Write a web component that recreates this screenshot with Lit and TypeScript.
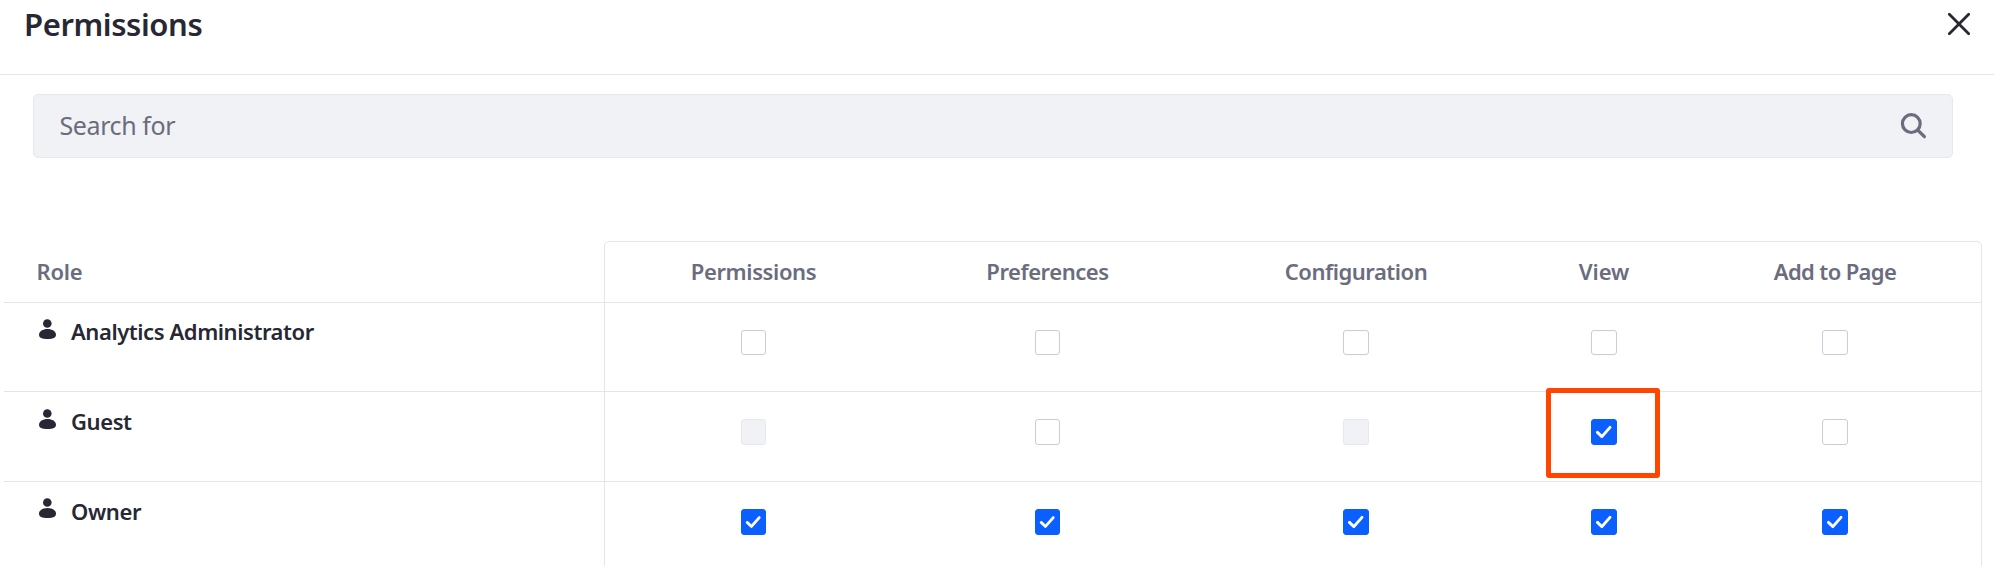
import { LitElement, html, css, svg, nothing } from "lit";
import { customElement, property } from "lit/decorators.js";
import { classMap } from "lit/directives/class-map.js";

type BoxState = "off" | "on" | "disabled" | "marked";

interface Label {
  text: string;
  tracking: number;
}

interface Role extends Label {
  boxes: BoxState[];
}

const COLUMNS: Label[] = [
  { text: "Permissions", tracking: -0.38 },
  { text: "Preferences", tracking: -0.45 },
  { text: "Configuration", tracking: -0.47 },
  { text: "View", tracking: -0.05 },
  { text: "Add to Page", tracking: -0.62 },
];

const ROLES: Role[] = [
  { text: "Analytics Administrator", tracking: -0.43, boxes: ["off", "off", "off", "off", "off"] },
  { text: "Guest", tracking: -0.4, boxes: ["disabled", "off", "disabled", "marked", "off"] },
  { text: "Owner", tracking: -0.4, boxes: ["on", "on", "on", "on", "on"] },
];

@customElement("permission-checkbox")
export class PermissionCheckbox extends LitElement {
  @property() state: BoxState = "off";

  static styles = css`
    :host {
      display: block;
      position: relative;
      width: var(--box-width, 26px);
      height: var(--box-height, 26px);
    }
    .box {
      box-sizing: border-box;
      width: 100%;
      height: 100%;
      border: 1px solid #cbcbda;
      border-radius: 3px;
      background: #fff;
    }
    .disabled {
      background: #f1f2f5;
      border-color: #e7e7ed;
    }
    .on {
      background: #0b5fff;
      border-color: #0b5fff;
    }
    .tick {
      display: block;
      width: 100%;
      height: 100%;
    }
    .marker {
      position: absolute;
      left: -45px;
      top: -31px;
      box-sizing: border-box;
      width: 114px;
      height: 90px;
      border: 5px solid #ff4500;
      border-radius: 3px;
    }
  `;

  render() {
    const checked = this.state === "on" || this.state === "marked";
    return html`
      <div class=${classMap({ box: true, on: checked, disabled: this.state === "disabled" })}>
        ${checked
          ? html`<svg class="tick" viewBox="0 0 24 24">
              <path d="M5.4 12.4L9.9 16.6L18 7.4" fill="none" stroke="#fff" stroke-width="2.9" stroke-linecap="round" stroke-linejoin="round" />
            </svg>`
          : nothing}
      </div>
      ${this.state === "marked" ? html`<div class="marker"></div>` : nothing}
    `;
  }
}

@customElement("app-root")
export class AppRoot extends LitElement {
  static styles = css`
    :host {
      display: block;
      height: 566px;
      overflow: hidden;
      background: #fff;
      color: #272833;
      font-family: "Noto Sans", sans-serif;
    }
    .header {
      box-sizing: border-box;
      display: flex;
      justify-content: space-between;
      align-items: flex-start;
      height: 75px;
      padding: 4px 23px 0 24px;
      border-bottom: 1px solid #e5e5e9;
    }
    .title {
      margin: 0;
      font-size: 31px;
      font-weight: 600;
      line-height: 40px;
      letter-spacing: -0.4px;
    }
    .close {
      width: 24px;
      height: 24px;
      margin-top: 8px;
    }
    .search {
      box-sizing: border-box;
      display: flex;
      align-items: center;
      justify-content: space-between;
      height: 64px;
      margin: 19px 41px 0 33px;
      padding: 0 25px;
      border: 1px solid #e7e7ed;
      border-radius: 5px;
      background: #f1f2f5;
      color: #6b6c7e;
      font-size: 25px;
      line-height: 34px;
      letter-spacing: -0.4px;
    }
    .placeholder {
      padding: 0 0 2px 0.5px;
    }
    .search svg {
      width: 28px;
      height: 28px;
    }
    .table {
      margin: 83px 12px 0 4px;
      font-size: 22px;
      font-weight: 600;
    }
    .row {
      display: grid;
      grid-template-columns: 600px 1378px;
    }
    .head {
      height: 62px;
      color: #6b6c7e;
    }
    .body {
      height: 90px;
    }
    .body.first {
      height: 89px;
      --box-height: 25px;
      --name-top: 16px;
    }
    .role {
      display: flex;
      border-bottom: 1px solid #e5e5e9;
    }
    .cells {
      display: grid;
      grid-template-columns: 297px 291px 326px 170px 292px;
      border: 1px solid #e5e5e9;
      border-top: 0;
    }
    .head .cells {
      border-top: 1px solid #e5e5e9;
      border-radius: 5px 5px 0 0;
    }
    .head .role {
      align-items: center;
      padding: 0 0 1px 32.5px;
      letter-spacing: -0.2px;
    }
    .heading {
      display: flex;
      align-items: center;
      justify-content: center;
      padding-bottom: 2px;
      white-space: nowrap;
    }
    .body .role {
      align-items: flex-start;
      padding-left: 35px;
      gap: 15px;
    }
    .person {
      width: 17px;
      height: 20px;
      margin-top: 16px;
    }
    .second .person {
      margin-top: 17px;
    }
    .name {
      padding-top: var(--name-top, 17px);
      line-height: 24px;
      white-space: nowrap;
    }
    .cell {
      display: flex;
      justify-content: center;
      padding-top: 27px;
    }
    .cell:nth-child(-n + 2) {
      --box-width: 25px;
    }
  `;

  private label(item: Label, name: string) {
    return html`<span class=${name} style="letter-spacing:${item.tracking}px">${item.text}</span>`;
  }

  private person() {
    return html`<svg class="person" viewBox="0 0 17 20">
      ${svg`<circle cx="8.3" cy="4.5" r="4.3" fill="#272833" />
      <path d="M8.5 9.9C13.2 9.9 17 12.2 17 15.7C17 18.7 14 20 8.5 20S0 18.7 0 15.7C0 12.2 3.8 9.9 8.5 9.9Z" fill="#272833" />`}
    </svg>`;
  }

  render() {
    return html`
      <header class="header">
        <h1 class="title">Permissions</h1>
        <svg class="close" viewBox="0 0 24 24">
          <path d="M2.3 2.3L21.7 21.7M21.7 2.3L2.3 21.7" fill="none" stroke="#272833" stroke-width="2.8" stroke-linecap="round" />
        </svg>
      </header>
      <div class="search">
        <span class="placeholder">Search for</span>
        <svg viewBox="0 0 28 28">
          <circle cx="12.3" cy="11.6" r="8.9" fill="none" stroke="#6b6c7e" stroke-width="3.2" />
          <path d="M18.6 18L25.4 24.7" stroke="#6b6c7e" stroke-width="3.2" stroke-linecap="round" />
        </svg>
      </div>
      <div class="table">
        <div class="row head">
          <div class="role"><span>Role</span></div>
          <div class="cells">${COLUMNS.map((c) => this.label(c, "heading"))}</div>
        </div>
        ${ROLES.map(
          (r, i) => html`<div class=${classMap({ row: true, body: true, first: i === 0, second: i === 1 })}>
            <div class="role">${this.person()}${this.label(r, "name")}</div>
            <div class="cells">
              ${r.boxes.map((b) => html`<div class="cell"><permission-checkbox .state=${b}></permission-checkbox></div>`)}
            </div>
          </div>`
        )}
      </div>
    `;
  }
}
